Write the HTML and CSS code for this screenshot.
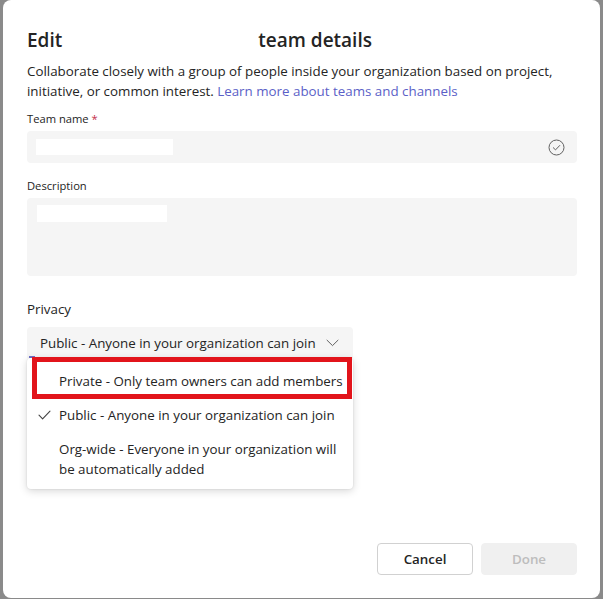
FILE: index.html
```html
<!DOCTYPE html>
<html lang="en">
<head>
<meta charset="utf-8">
<title>Edit team details</title>
<link rel="stylesheet" href="styles.css">
</head>
<body>
<div class="dialog">
  <h1 class="title"><span>Edit</span><span class="redact-title"></span><span>team details</span></h1>
  <p class="intro">Collaborate closely with a group of people inside your organization based on project,<br>initiative, or common interest. <a href="#" class="link">Learn more about teams and channels</a></p>

  <label class="label">Team name <span class="req">*</span></label>
  <div class="input">
    <span class="redact redact-name"></span>
    <svg class="check-circle" width="17" height="17" viewBox="0 0 17 17" fill="none">
      <circle cx="8.5" cy="8.5" r="7.5" stroke="#616161" stroke-width="1"/>
      <path d="M5.3 8.7 L7.5 10.9 L11.7 6.5" stroke="#616161" stroke-width="1" stroke-linecap="round" stroke-linejoin="round"/>
    </svg>
  </div>

  <label class="label label-desc">Description</label>
  <div class="textarea"><span class="redact redact-desc"></span></div>

  <div class="label-privacy">Privacy</div>
  <div class="dropdown-wrap">
    <div class="dropdown">
      <span>Public - Anyone in your organization can join</span>
      <svg class="chevron" width="13" height="8" viewBox="0 0 13 8" fill="none">
        <path d="M1 1.2 L6.5 6.6 L12 1.2" stroke="#616161" stroke-width="1" stroke-linecap="round" stroke-linejoin="round"/>
      </svg>
    </div>
    <span class="focus-mark"></span>
    <ul class="menu">
      <li class="item"><span class="tick"></span><span>Private - Only team owners can add members</span></li>
      <li class="item"><span class="tick"><svg width="13" height="10" viewBox="0 0 13 10" fill="none"><path d="M1 5.2 L4.6 8.8 L12 1.2" stroke="#424242" stroke-width="1.1" stroke-linecap="round" stroke-linejoin="round"/></svg></span><span>Public - Anyone in your organization can join</span></li>
      <li class="item"><span class="tick"></span><span>Org-wide - Everyone in your organization will<br>be automatically added</span></li>
    </ul>
    <span class="highlight"></span>
  </div>

  <div class="actions">
    <button class="btn btn-cancel">Cancel</button>
    <button class="btn btn-done" disabled>Done</button>
  </div>
</div>
</body>
</html>
```
FILE: styles.css
```css
* { box-sizing: border-box; }
html, body { margin: 0; padding: 0; }
body {
  background: #8a8a8a;
  font-family: "Open Sans", "Noto Sans", "Liberation Sans", sans-serif;
  color: #242424;
  width: 603px;
  height: 599px;
  overflow: hidden;
}
.dialog {
  margin: 0 3px;
  width: 597px;
  height: 598px;
  background: #fff;
  border-radius: 8px;
  padding: 26px 23px 0 24px;
  display: flex;
  flex-direction: column;
}
.title {
  margin: 0;
  font-size: 19px;
  font-weight: 600;
  line-height: 28px;
  display: flex;
  color: #242424;
}
.redact-title { width: 196px; }
.intro {
  margin: 7px 0 0;
  font-size: 13.35px;
  line-height: 20px;
}
.link { color: #5b5fc7; text-decoration: none; }
.label {
  display: block;
  margin-top: 10px;
  font-size: 11.2px;
  line-height: 16px;
  color: #242424;
}
.req { color: #c4314b; }
.input {
  margin-top: 4px;
  height: 32px;
  background: #f5f5f5;
  border-radius: 4px;
  display: flex;
  align-items: center;
  justify-content: space-between;
  padding: 0 12px 0 9px;
}
.redact { display: block; background: #fff; }
.redact-name { width: 137px; height: 16px; }
.check-circle { display: block; }
.label-desc { margin-top: 15px; }
.textarea {
  margin-top: 4px;
  height: 78px;
  background: #f5f5f5;
  border-radius: 4px;
  padding: 7px 0 0 10px;
}
.redact-desc { width: 130px; height: 17px; }
.label-privacy {
  margin-top: 23px;
  font-size: 13.35px;
  line-height: 20px;
}
.dropdown-wrap {
  position: relative;
  margin-top: 8px;
  width: 326px;
}
.dropdown {
  height: 31px;
  background: #f5f5f5;
  border-radius: 4px 4px 0 0;
  display: flex;
  align-items: center;
  justify-content: space-between;
  padding: 0 14px 0 13px;
  font-size: 13.35px;
}
.chevron { display: block; margin-top: 1px; }
.focus-mark {
  position: absolute;
  left: 2px;
  top: 29px;
  width: 6px;
  height: 2px;
  background: #6f72c9;
}
.menu {
  position: absolute;
  left: 0;
  top: 31px;
  width: 326px;
  margin: 0;
  padding: 6px 0 3px;
  list-style: none;
  background: #fff;
  border-radius: 4px;
  box-shadow: 0 2px 8px rgba(0,0,0,0.16), 0 0 2px rgba(0,0,0,0.12);
  font-size: 13.35px;
}
.item {
  display: flex;
  align-items: flex-start;
  padding: 7px 6px 7px 11px;
  line-height: 20px;
  white-space: nowrap;
}
.tick {
  width: 21px;
  flex: none;
  height: 20px;
  display: flex;
  align-items: center;
}
.tick svg { display: block; }
.highlight {
  position: absolute;
  left: 5px;
  top: 30px;
  width: 320px;
  height: 42px;
  border: 5.5px solid #e2141b;
}
.actions {
  margin-top: auto;
  margin-bottom: 23px;
  display: flex;
  justify-content: flex-end;
  gap: 8px;
}
.btn {
  width: 96px;
  height: 32px;
  border-radius: 4px;
  font-family: inherit;
  font-size: 13.35px;
  font-weight: 600;
  padding: 0;
}
.btn-cancel {
  background: #fff;
  border: 1px solid #d1d1d1;
  color: #242424;
}
.btn-done {
  background: #f0f0f0;
  border: 1px solid #f0f0f0;
  color: #bdbdbd;
}
```
